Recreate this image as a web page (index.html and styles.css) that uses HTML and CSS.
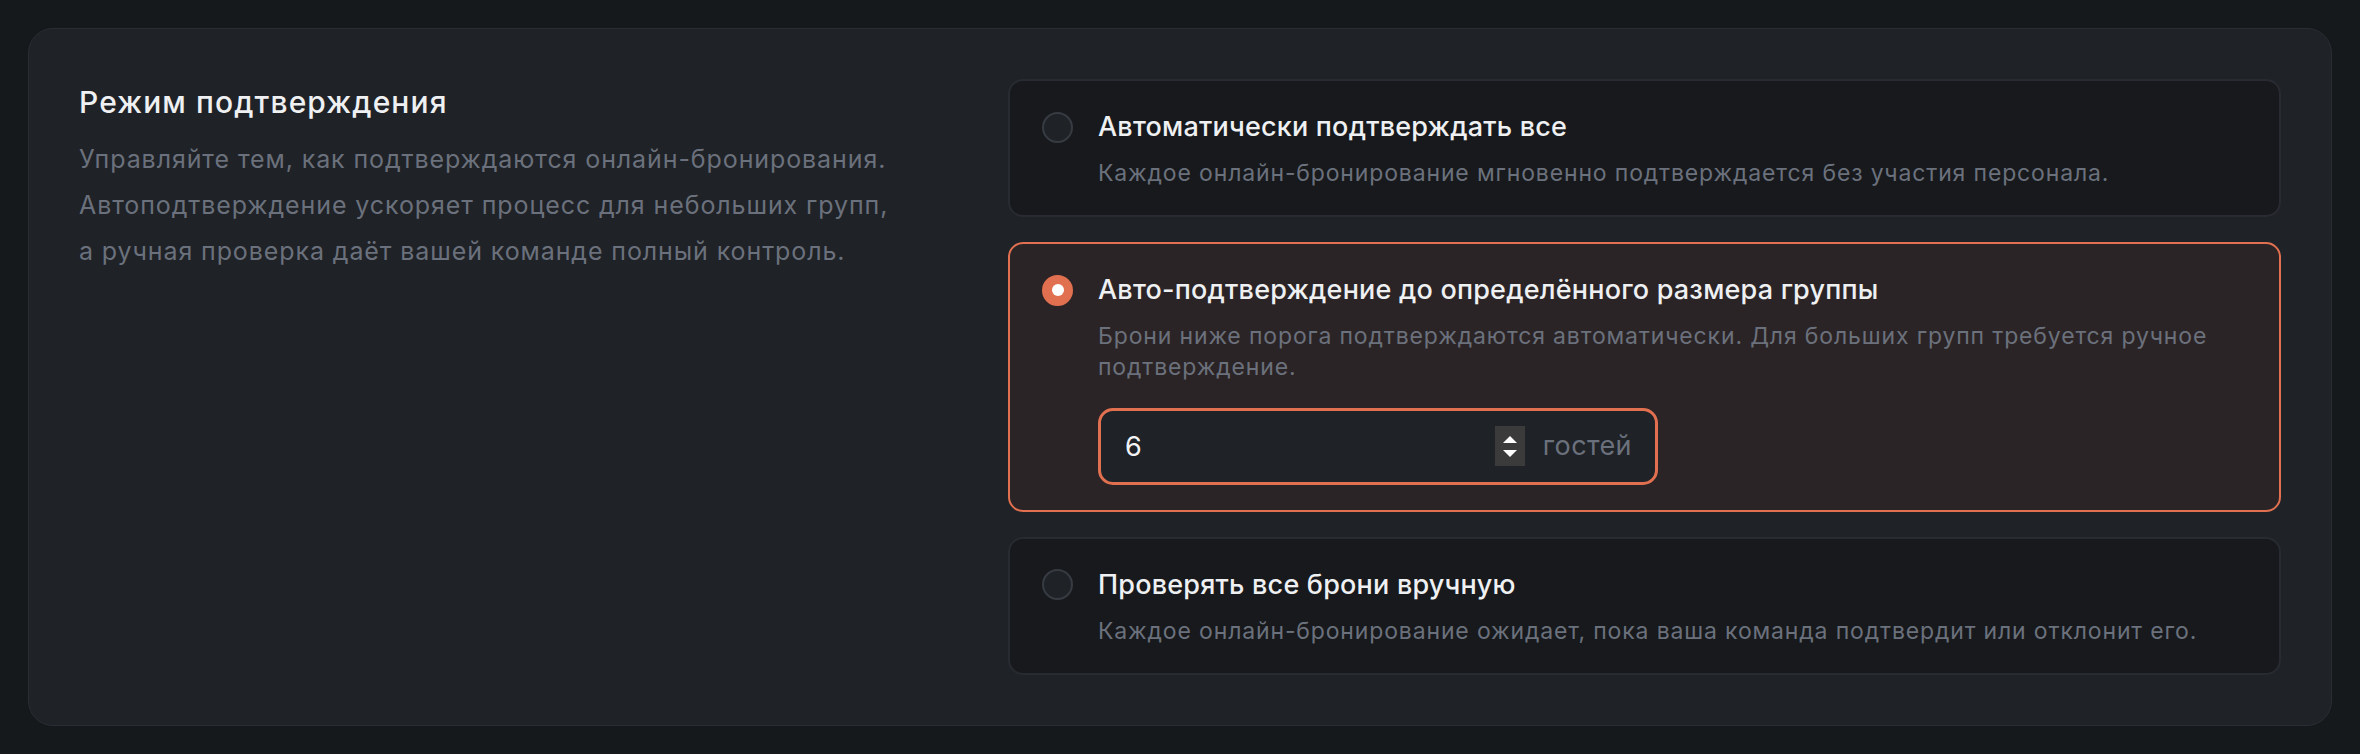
FILE: index.html
```html
<!DOCTYPE html>
<html lang="ru">
<head>
<meta charset="utf-8">
<title>Режим подтверждения</title>
<link rel="stylesheet" href="styles.css">
</head>
<body>
<section class="panel">
  <div class="intro">
    <h2 class="intro-title">Режим подтверждения</h2>
    <p class="intro-text">Управляйте тем, как подтверждаются онлайн-бронирования.<br>Автоподтверждение ускоряет процесс для небольших групп,<br>а ручная проверка даёт вашей команде полный контроль.</p>
  </div>
  <div class="options">
    <label class="option">
      <span class="radio"></span>
      <span class="option-body">
        <span class="option-title">Автоматически подтверждать все</span>
        <span class="option-text">Каждое онлайн-бронирование мгновенно подтверждается без участия персонала.</span>
      </span>
    </label>
    <label class="option option-selected">
      <span class="radio radio-on"><span class="radio-dot"></span></span>
      <span class="option-body">
        <span class="option-title">Авто-подтверждение до определённого размера группы</span>
        <span class="option-text">Брони ниже порога подтверждаются автоматически. Для больших групп требуется ручное подтверждение.</span>
        <span class="field">
          <input class="field-input" type="number" value="6" aria-label="Размер группы">
          <span class="spin"><span class="spin-up"></span><span class="spin-down"></span></span>
          <span class="field-unit">гостей</span>
        </span>
      </span>
    </label>
    <label class="option">
      <span class="radio"></span>
      <span class="option-body">
        <span class="option-title">Проверять все брони вручную</span>
        <span class="option-text">Каждое онлайн-бронирование ожидает, пока ваша команда подтвердит или отклонит его.</span>
      </span>
    </label>
  </div>
</section>
</body>
</html>
```
FILE: styles.css
```css
* { box-sizing: border-box; }
html, body { margin: 0; padding: 0; }
body {
  background: #16191c;
  font-family: Inter, "Noto Sans", sans-serif;
  padding: 28px;
  min-height: 754px;
}
.panel {
  background: #1f2227;
  border: 1px solid #2a2d33;
  border-radius: 25px;
  padding: 50px;
  display: grid;
  grid-template-columns: 881px 1fr;
  column-gap: 48px;
  align-items: start;
}
.intro-title {
  margin: 0;
  font-size: 30px;
  line-height: 46px;
  font-weight: 500;
  letter-spacing: 1.1px;
  color: #eef0f2;
}
.intro-text {
  margin: 11px 0 0;
  font-size: 25px;
  line-height: 46px;
  letter-spacing: 0.9px;
  white-space: nowrap;
  color: #6b717c;
}
.options {
  display: flex;
  flex-direction: column;
  gap: 25px;
}
.option {
  display: flex;
  align-items: flex-start;
  gap: 25px;
  background: #17191c;
  border: 2px solid #282b31;
  border-radius: 15px;
  padding: 26px 32px 27px;
}
.option-selected {
  background: #2b2426;
  border-color: #e07050;
  padding-bottom: 25px;
}
.radio {
  flex: none;
  width: 31px;
  height: 31px;
  margin-top: 4.5px;
  border-radius: 50%;
  border: 2px solid #373b42;
  background: #1f2227;
  display: flex;
  align-items: center;
  justify-content: center;
}
.radio-on {
  background: #e07050;
  border-color: #e07050;
}
.radio-dot {
  width: 12px;
  height: 12px;
  border-radius: 50%;
  background: #ffffff;
}
.option-body {
  flex: 1;
  display: flex;
  flex-direction: column;
  align-items: flex-start;
}
.option-title {
  font-size: 27px;
  line-height: 40px;
  font-weight: 500;
  letter-spacing: 0.2px;
  color: #eef0f2;
}
.option-text {
  margin-top: 11px;
  font-size: 23px;
  line-height: 30.3px;
  letter-spacing: 0.85px;
  color: #6b717c;
}
.field {
  margin-top: 26px;
  width: 560px;
  height: 77px;
  display: flex;
  align-items: center;
  background: #1f2227;
  border: 3px solid #e07050;
  border-radius: 15px;
  padding: 0 23px 0 24px;
}
.field-input {
  flex: 1;
  min-width: 0;
  border: 0;
  outline: 0;
  background: transparent;
  color: #f2f3f5;
  font-family: Inter, "Noto Sans", sans-serif;
  font-size: 27px;
  padding: 0;
  appearance: textfield;
  -moz-appearance: textfield;
}
.field-input::-webkit-inner-spin-button,
.field-input::-webkit-outer-spin-button {
  -webkit-appearance: none;
  margin: 0;
}
.spin {
  flex: none;
  width: 30px;
  height: 40px;
  background: #3b3b3b;
  display: flex;
  flex-direction: column;
  align-items: center;
  justify-content: center;
  gap: 7px;
}
.spin-up, .spin-down {
  width: 0;
  height: 0;
  border-left: 7.5px solid transparent;
  border-right: 7.5px solid transparent;
}
.spin-up { border-bottom: 7px solid #ffffff; }
.spin-down { border-top: 7px solid #ffffff; }
.field-unit {
  margin-left: 18px;
  font-size: 27px;
  line-height: 40px;
  letter-spacing: 0.4px;
  color: #6b717c;
}
```
